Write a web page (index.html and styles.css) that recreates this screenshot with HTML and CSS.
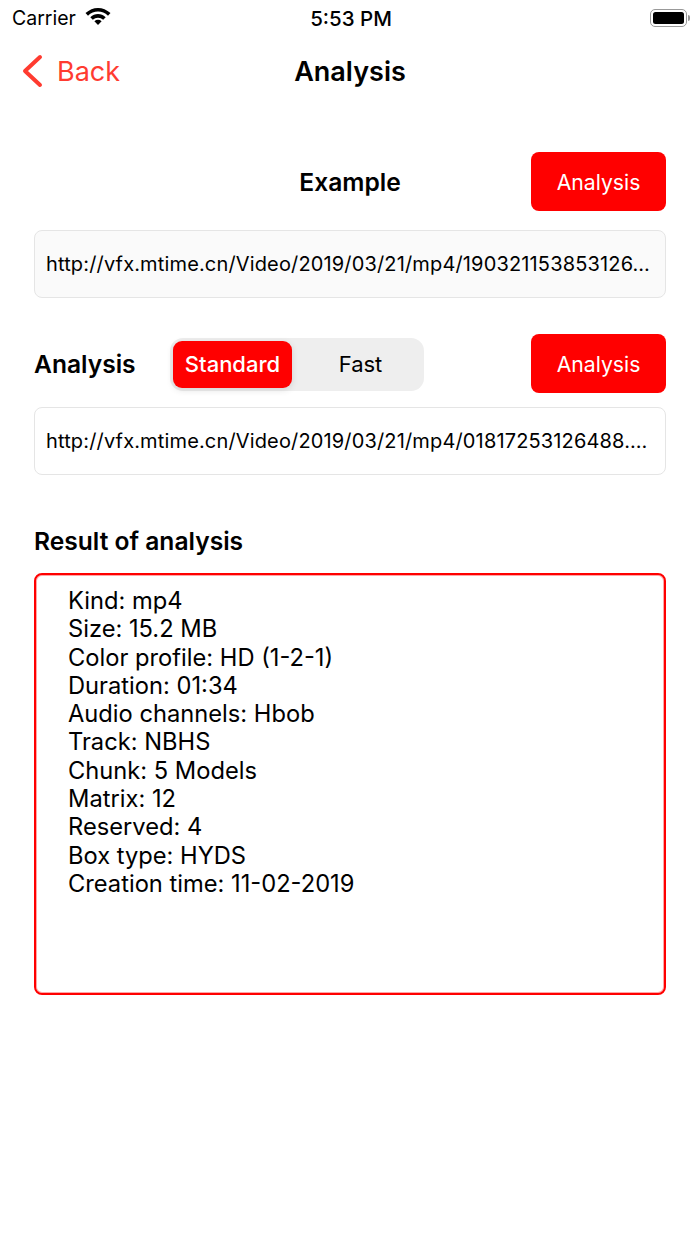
FILE: index.html
```html
<!DOCTYPE html>
<html lang="en">

<head>
    <meta charset="UTF-8">
    <meta name="viewport" content="width=device-width, initial-scale=1.0">
    <title>Analysis</title>
    <link rel="stylesheet" href="styles.css">
</head>

<body>
    <!-- status bar -->
    <div class="status">
        <div class="carrier">
            <span>Carrier</span>
            <svg class="wifi" width="26" height="19" viewBox="0 0 26 19">
                <path d="M13 1C8.400 1 4.300 2.800 .5 6.100L3 8.700C5.900 6.100 9.300 4.600 13 4.600S20.100 6.100 23 8.700L25.500 6.100C21.700 2.800 17.600 1 13 1Z" />
                <path d="M13 7C10.200 7 7.700 8.100 5.300 10.200L7.800 12.800C9.300 11.400 11 10.700 13 10.700S16.700 11.400 18.200 12.800L20.700 10.200C18.300 8.100 15.800 7 13 7Z" />
                <path d="M13 12.800C11.700 12.800 10.500 13.300 9.400 14.200L13 18L16.600 14.200C15.500 13.300 14.300 12.800 13 12.800Z" />
            </svg>
        </div>
        <div class="time">5:53 PM</div>
        <div class="battery">
            <div class="battery-body"><div class="battery-fill"></div></div>
            <div class="battery-cap"></div>
        </div>
    </div>

    <!-- nav -->
    <div class="nav">
        <a href="#" class="back">
            <svg width="24" height="34" viewBox="0 0 24 34">
                <path d="M20 3L5 17L20 31" />
            </svg>
            <span>Back</span>
        </a>
        <h1>Analysis</h1>
    </div>

    <div class="content">
        <div class="row row-example">
            <h2 class="center-title">Example</h2>
            <button class="btn">Analysis</button>
        </div>
        <div class="url url-gray">http://vfx.mtime.cn/Video/2019/03/21/mp4/190321153853126…</div>

        <div class="row row-analysis">
            <h2 class="row-label">Analysis</h2>
            <div class="seg">
                <div class="seg-item on">Standard</div>
                <div class="seg-item">Fast</div>
            </div>
            <button class="btn">Analysis</button>
        </div>
        <div class="url">http://vfx.mtime.cn/Video/2019/03/21/mp4/01817253126488.…</div>

        <h2 class="result-title">Result of analysis</h2>
        <div class="result">
            <p>Kind: mp4</p>
            <p>Size: 15.2 MB</p>
            <p>Color profile: HD (1-2-1)</p>
            <p>Duration: 01:34</p>
            <p>Audio channels: Hbob</p>
            <p>Track: NBHS</p>
            <p>Chunk: 5 Models</p>
            <p>Matrix: 12</p>
            <p>Reserved: 4</p>
            <p>Box type: HYDS</p>
            <p>Creation time: 11-02-2019</p>
        </div>
    </div>
</body>

</html>
```

FILE: styles.css
```css
* {
    margin: 0;
    box-sizing: border-box;
}

body {
    font-family: Inter, "Liberation Sans", sans-serif;
    color: #000;
    background: #fff;
}

a {
    text-decoration: none;
}

/* status bar */
.status {
    display: grid;
    grid-template-columns: 1fr auto 1fr;
    align-items: center;
    height: 36px;
    padding: 0 10px 0 12px;
}

.carrier {
    display: flex;
    align-items: center;
    gap: 9px;
    font-size: 19.5px;
}

.wifi {
    fill: #000;
    margin-top: -4px;
}

.time {
    font-size: 20.5px;
    font-weight: 500;
}

.battery {
    display: flex;
    align-items: center;
    justify-content: flex-end;
    gap: 1px;
}

.battery-body {
    width: 37px;
    height: 18px;
    padding: 2px;
    border: 1.5px solid #999;
    border-radius: 5px;
}

.battery-fill {
    height: 100%;
    background: #000;
    border-radius: 2.5px;
}

.battery-cap {
    width: 2px;
    height: 6px;
    background: #999;
    border-radius: 0 2px 2px 0;
}

/* nav */
.nav {
    display: flex;
    align-items: center;
    justify-content: center;
    height: 70px;
    position: relative;
}

.nav h1 {
    font-size: 27px;
    font-weight: 600;
}

.back {
    position: absolute;
    left: 20px;
    top: 18px;
    display: flex;
    align-items: center;
    gap: 13px;
    color: #ff3b30;
    font-size: 27px;
}

.back svg {
    fill: none;
    stroke: #ff3b30;
    stroke-width: 4;
    stroke-linecap: round;
    stroke-linejoin: round;
}

/* content */
.content {
    padding: 46px 34px 0;
}

.row {
    display: flex;
    align-items: center;
    justify-content: space-between;
    height: 59px;
    position: relative;
}

h2 {
    font-size: 24.6px;
    font-weight: 600;
}

/* 가운데 제목은 버튼 폭을 무시 */
.center-title {
    position: absolute;
    left: 0;
    right: 0;
    text-align: center;
}

.row-example {
    justify-content: flex-end;
}

.row-label {
    width: 101px;
    white-space: nowrap;
}

.btn {
    width: 135px;
    height: 59px;
    border: 0;
    border-radius: 8px;
    background: #f00;
    color: #fff;
    font-family: inherit;
    font-size: 21.2px;
}

.url {
    height: 68px;
    margin-top: 19px;
    padding: 0 11px;
    border: 1px solid #e5e5e5;
    border-radius: 8px;
    font-size: 20px;
    letter-spacing: .15px;
    line-height: 66px;
    white-space: nowrap;
}

.url-gray {
    background: #fafafa;
}

.row-analysis {
    margin-top: 36px;
}

.row-analysis+.url {
    margin-top: 14px;
}

/* segment */
.seg {
    display: flex;
    width: 254px;
    height: 53px;
    margin: 1px auto 0 35px;
    padding: 3px;
    background: #eee;
    border-radius: 13px;
}

.seg-item {
    display: flex;
    align-items: center;
    justify-content: center;
    flex: 1;
    padding-left: 8px;
    font-size: 22px;
}

.seg-item.on {
    flex: none;
    width: 119px;
    padding-left: 0;
    border-radius: 9px;
    background: #f00;
    color: #fff;
    font-weight: 500;
    box-shadow: 0 2px 7px rgba(0, 0, 0, .12);
}

/* result */
.result-title {
    margin-top: 51px;
    line-height: 30px;
}

.result {
    height: 422px;
    margin-top: 17px;
    padding: 12px 32px;
    border: 2px solid #f00;
    border-radius: 8px;
    box-shadow: inset 0 0 0 1px rgba(255, 0, 0, .35);
    font-size: 23.7px;
    line-height: 28.3px;
}
```
